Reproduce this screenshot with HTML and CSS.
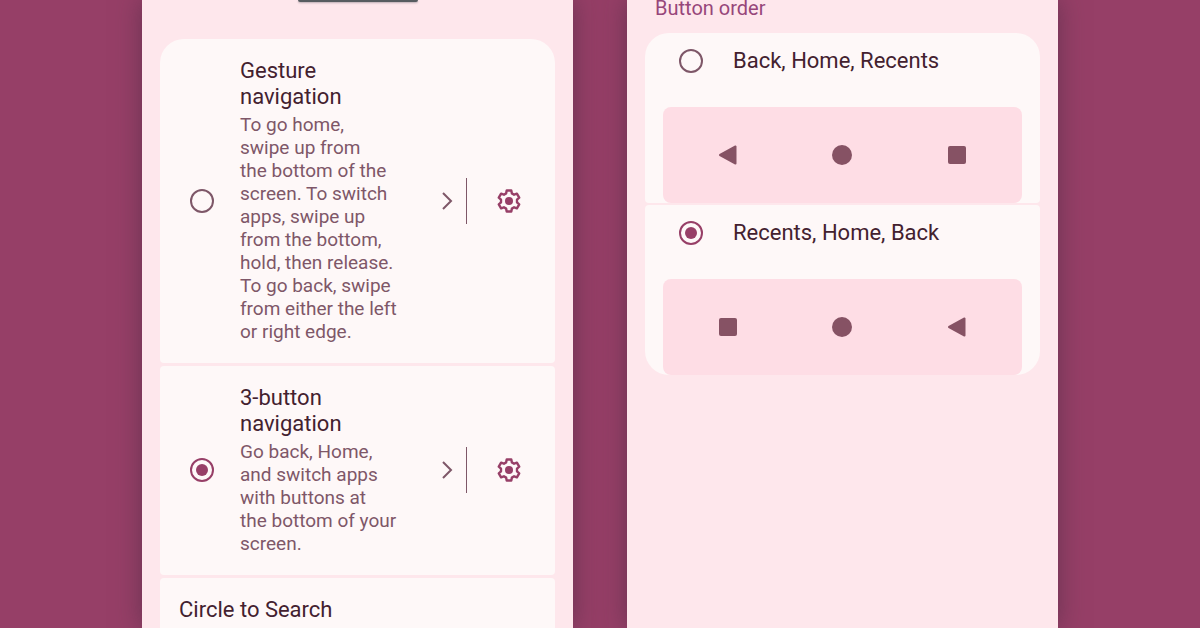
FILE: index.html
```html
<!DOCTYPE html>
<html lang="en">
<head>
    <meta charset="UTF-8">
    <meta name="viewport" content="width=device-width, initial-scale=1.0">
    <title>Navigation mode</title>
    <link rel="stylesheet" href="styles.css">
</head>
<body>
    <svg class="sprite" aria-hidden="true">
        <symbol id="chevron" viewBox="0 0 12 20">
            <path d="M2 2l8 8-8 8" fill="none" stroke="currentColor" stroke-width="2"/>
        </symbol>
        <symbol id="gear" viewBox="0 0 24 24">
            <path d="M9.700 1.500h4.600l.6 2.900 2.200 1.300 2.800-1 2.300 4-2.200 2v2.600l2.200 2-2.300 4-2.800-1-2.200 1.300-.6 2.900H9.700l-.6-2.900-2.200-1.300-2.800 1-2.300-4 2.200-2v-2.600l-2.200-2 2.300-4 2.800 1 2.200-1.300z" fill="none" stroke="currentColor" stroke-width="2.400" stroke-linejoin="round"/>
            <circle cx="12" cy="12" r="4" fill="currentColor"/>
        </symbol>
        <symbol id="back" viewBox="0 0 20 20">
            <path d="M2 10L17.500 1.500v17z" fill="currentColor" stroke="currentColor" stroke-width="2" stroke-linejoin="round"/>
        </symbol>
        <symbol id="home" viewBox="0 0 20 20">
            <circle cx="10" cy="10" r="10" fill="currentColor"/>
        </symbol>
        <symbol id="recents" viewBox="0 0 20 20">
            <rect x="1" y="1" width="18" height="18" rx="2" fill="currentColor"/>
        </symbol>
    </svg>

    <main class="stage">
        <section class="phone">
            <div class="preview-edge"></div>
            <div class="cards">
                <div class="card mode">
                    <input type="radio" name="mode" id="gesture" class="radio">
                    <label for="gesture" class="mode-text">
                        <span class="title">Gesture<br>navigation</span>
                        <span class="description">To go home,<br>swipe up from<br>the bottom of the<br>screen. To switch<br>apps, swipe up<br>from the bottom,<br>hold, then release.<br>To go back, swipe<br>from either the left<br>or right edge.</span>
                    </label>
                    <svg class="chevron"><use href="#chevron"/></svg>
                    <span class="divider"></span>
                    <button class="settings" aria-label="Gesture navigation settings"><svg class="gear"><use href="#gear"/></svg></button>
                </div>
                <div class="card mode">
                    <input type="radio" name="mode" id="buttons" class="radio" checked>
                    <label for="buttons" class="mode-text">
                        <span class="title">3-button<br>navigation</span>
                        <span class="description">Go back, Home,<br>and switch apps<br>with buttons at<br>the bottom of your<br>screen.</span>
                    </label>
                    <svg class="chevron"><use href="#chevron"/></svg>
                    <span class="divider"></span>
                    <button class="settings" aria-label="3-button navigation settings"><svg class="gear"><use href="#gear"/></svg></button>
                </div>
                <div class="card search">
                    <span class="title">Circle to Search</span>
                </div>
            </div>
        </section>

        <section class="phone">
            <h2 class="heading">Button order</h2>
            <div class="cards order-cards">
                <div class="card order">
                    <div class="order-row">
                        <input type="radio" name="order" id="back-first" class="radio">
                        <label for="back-first" class="title">Back, Home, Recents</label>
                    </div>
                    <div class="nav-preview">
                        <svg class="nav-icon"><use href="#back"/></svg>
                        <svg class="nav-icon"><use href="#home"/></svg>
                        <svg class="nav-icon"><use href="#recents"/></svg>
                    </div>
                </div>
                <div class="card order">
                    <div class="order-row">
                        <input type="radio" name="order" id="recents-first" class="radio" checked>
                        <label for="recents-first" class="title">Recents, Home, Back</label>
                    </div>
                    <div class="nav-preview">
                        <svg class="nav-icon"><use href="#recents"/></svg>
                        <svg class="nav-icon"><use href="#home"/></svg>
                        <svg class="nav-icon"><use href="#back"/></svg>
                    </div>
                </div>
            </div>
        </section>
    </main>
</body>
</html>
```
FILE: styles.css
```css
* {
    box-sizing: border-box;
}
body {
    margin: 0;
    background: #963f67;
    color: #43212f;
    font-family: Roboto, "Liberation Sans", sans-serif;
}
.sprite {
    display: none;
}
.stage {
    display: grid;
    grid-template-columns: 1fr 1fr;
    gap: 54px;
    height: 100vh;
    padding: 0 142px;
}
.phone {
    overflow: hidden;
    padding: 0 18px;
    background: #fee7ec;
    box-shadow: 0 0 24px rgba(60, 40, 60, 0.5);
}
/* Bottom edge of the animation preview */
.preview-edge {
    width: 120px;
    height: 2px;
    margin: 0 auto 37px;
    border-radius: 0 0 4px 4px;
    background: #575c60;
    box-shadow: 0 1px 2px rgba(80, 80, 90, 0.4);
}
.cards {
    display: flex;
    flex-direction: column;
    gap: 3px;
    border-radius: 24px;
    overflow: hidden;
}
.card {
    border-radius: 4px;
    background: #fef8f8;
}
.title {
    font-size: 22px;
    line-height: 26px;
}
.mode {
    display: flex;
    align-items: center;
    padding: 19px 34px 20px 30px;
}
.mode-text {
    display: flex;
    flex: 1;
    flex-direction: column;
    gap: 3px;
    margin-left: 26px;
    white-space: nowrap;
}
.description {
    color: #7e5768;
    font-size: 19px;
    line-height: 23px;
}
.radio {
    appearance: none;
    display: grid;
    flex: none;
    place-items: center;
    width: 24px;
    height: 24px;
    margin: 0;
    border: 2px solid #7e5768;
    border-radius: 50%;
}
.radio:checked {
    border-color: #973f67;
}
.radio:checked::before {
    content: "";
    width: 12px;
    height: 12px;
    border-radius: 50%;
    background: #973f67;
}
.chevron {
    width: 12px;
    height: 20px;
    color: #7e5768;
}
.divider {
    width: 1px;
    height: 46px;
    margin: 0 30px 0 13px;
    background: #7e5768;
}
.settings {
    display: flex;
    padding: 0;
    border: 0;
    background: none;
    color: #973f67;
    cursor: pointer;
}
.gear {
    width: 24px;
    height: 24px;
}
.search {
    padding: 19px 19px 48px;
}
.heading {
    margin: 0 10px 17px;
    color: #97467a;
    font-size: 20px;
    font-weight: 400;
    line-height: 16px;
}
.order-cards {
    gap: 2px;
}
.order {
    padding: 0 18px;
}
.order-row {
    display: flex;
    align-items: center;
    gap: 30px;
    height: 56px;
    margin-bottom: 18px;
    padding-left: 16px;
}
.nav-preview {
    display: flex;
    align-items: center;
    justify-content: space-around;
    height: 96px;
    padding: 0 8px;
    border-radius: 8px;
    background: #fedde5;
}
.nav-icon {
    width: 20px;
    height: 20px;
    color: #865264;
}
```
